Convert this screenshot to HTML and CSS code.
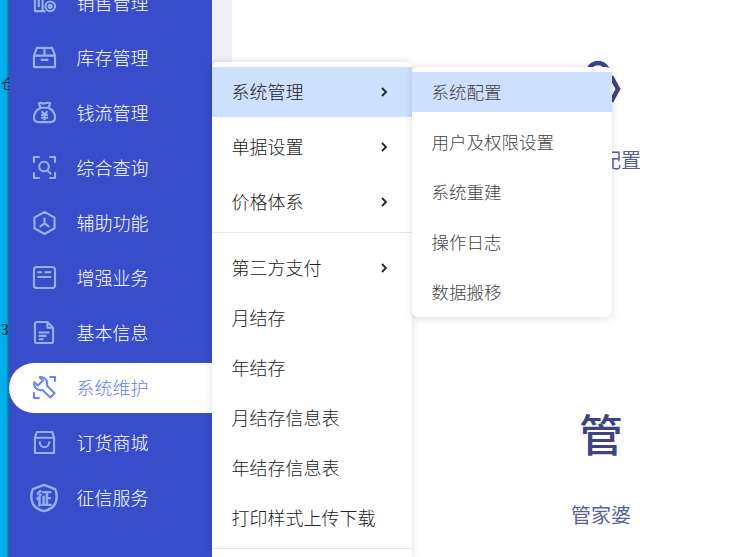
FILE: index.html
```html
<!DOCTYPE html>
<html lang="zh">
<head>
<meta charset="utf-8">
<title>系统维护</title>
<link rel="stylesheet" href="styles.css">
</head>
<body>
<div class="app">
  <div class="strip"><span class="strip-a">仓</span><span class="strip-b">3</span></div>
  <nav class="sidebar">
    <div class="nav-item"><svg class="nav-icon" viewBox="0 0 24 24"><path d="M10 1v20H2V1M10 21h3M6 8v9"/><circle cx="18" cy="16" r="5"/><circle cx="18" cy="16" r="1.6"/></svg><span>销售管理</span></div>
    <div class="nav-item"><svg class="nav-icon" viewBox="0 0 24 24"><path d="M1 10l3-8h16l3 8v12H1zM1 10h22M12 2v8M8 14.500h8"/></svg><span>库存管理</span></div>
    <div class="nav-item"><svg class="nav-icon" viewBox="0 0 24 24"><path d="M8 7L6 2.500c2-1.500 3.500.5 6 0s4-1.500 6 0L16 7M8 7h8M8 7c-4 2-7 6-7 10 0 3 2 5 5 5h12c3 0 5-2 5-5 0-4-3-8-7-10M9 10.500l3 3.500 3-3.500M8.500 14.500h7M8.500 17.500h7M12 14v6"/></svg><span>钱流管理</span></div>
    <div class="nav-item"><svg class="nav-icon" viewBox="0 0 24 24"><path d="M1 7V1h6M17 1h6v6M23 17v6h-6M7 23H1v-6"/><circle cx="11.500" cy="11" r="5"/><path d="M15 15l4 4"/></svg><span>综合查询</span></div>
    <div class="nav-item"><svg class="nav-icon" viewBox="0 0 24 24"><path d="M12 1l10.500 6v11L12 24 1.500 18V7zM12 7v6M12 13l-5 3.500M12 13l5 3.500"/></svg><span>辅助功能</span></div>
    <div class="nav-item"><svg class="nav-icon" viewBox="0 0 24 24"><rect x="1" y="1" width="22" height="22" rx="3"/><path d="M4.500 6.500h5M12 6.500h7M4.500 11.500h14.500"/></svg><span>增强业务</span></div>
    <div class="nav-item"><svg class="nav-icon" viewBox="0 0 24 24"><path d="M4 1h11l6 6v14a2 2 0 0 1-2 2H4a2 2 0 0 1-2-2V3a2 2 0 0 1 2-2zM15 1v6h6M6 12h11M6 15.500h8M6 19h5"/></svg><span>基本信息</span></div>
    <div class="nav-item active"><svg class="nav-icon" viewBox="0 0 24 24"><path d="M7 1.200L10.500 4.700 5 10 1.500 6.500C0 12 5 16 10 14.500l8 8 4.500-4.500-8-8C16 5 12 0 7 1.200zM17 1h6v5M1 17v6h6"/></svg><span>系统维护</span></div>
    <div class="nav-item"><svg class="nav-icon" viewBox="0 0 24 24"><path d="M4 1h16l2 6v16H2V7zM2 7h20M7 11c0 8 10 8 10 0"/></svg><span>订货商城</span></div>
    <div class="nav-item"><svg class="nav-icon nav-icon-big" viewBox="0 0 30 30"><path d="M15 1l12 4.500c2 5 2 11 0 15.500-2 4-7 7-12 8-5-1-10-4-12-8-2-4.500-2-10.500 0-15.500z"/><text class="shield-text" x="15" y="21" text-anchor="middle">征</text></svg><span>征信服务</span></div>
  </nav>
  <div class="gutter"></div>
  <main class="content">
    <section class="tile tile-top">
      <svg class="tile-icon" viewBox="0 0 44 44"><circle cx="18" cy="16" r="10"/><path class="nut" d="M18 21h14l6 11-6 11H18l-6-11z"/></svg>
      <div class="tile-label">系统配置</div>
    </section>
    <section class="tile tile-bottom">
      <div class="tile-glyph">管</div>
      <div class="tile-label">管家婆</div>
    </section>
  </main>
  <div class="menu">
    <div class="menu-group group-one">
      <div class="menu-item selected"><span>系统管理</span><svg class="chev" viewBox="0 0 8 10"><path d="M2 1l4 4-4 4"/></svg></div>
      <div class="menu-item"><span>单据设置</span><svg class="chev" viewBox="0 0 8 10"><path d="M2 1l4 4-4 4"/></svg></div>
      <div class="menu-item"><span>价格体系</span><svg class="chev" viewBox="0 0 8 10"><path d="M2 1l4 4-4 4"/></svg></div>
    </div>
    <div class="menu-group group-two">
      <div class="menu-item"><span>第三方支付</span><svg class="chev" viewBox="0 0 8 10"><path d="M2 1l4 4-4 4"/></svg></div>
      <div class="menu-item"><span>月结存</span></div>
      <div class="menu-item"><span>年结存</span></div>
      <div class="menu-item"><span>月结存信息表</span></div>
      <div class="menu-item"><span>年结存信息表</span></div>
      <div class="menu-item"><span>打印样式上传下载</span></div>
    </div>
  </div>
  <div class="submenu">
    <div class="sub-item selected"><span>系统配置</span></div>
    <div class="sub-item"><span>用户及权限设置</span></div>
    <div class="sub-item"><span>系统重建</span></div>
    <div class="sub-item"><span>操作日志</span></div>
    <div class="sub-item"><span>数据搬移</span></div>
  </div>
</div>
</body>
</html>
```
FILE: styles.css
```css
* { box-sizing: border-box; }
html, body { margin: 0; padding: 0; height: 100%; overflow: hidden; background: #fff; }
body { font-family: "Noto Sans CJK SC", "Liberation Sans", sans-serif; font-weight: 300; }
.app { position: relative; display: flex; width: 742px; height: 557px; overflow: hidden; }
.strip { position: relative; width: 9px; flex: none; background: linear-gradient(90deg, #00b4ec 0, #00aae6 7px, #0a7c96 8px); }
.strip-a, .strip-b { position: absolute; left: 1px; font-size: 14px; line-height: 16px; color: #123; font-weight: 400; overflow: hidden; width: 8px; }
.strip-a { top: 75px; }
.strip-b { top: 321px; }
.sidebar { width: 203px; flex: none; background: #384dc9; display: flex; flex-direction: column; }
.nav-item { display: flex; align-items: center; height: 55px; flex: none; color: #fff; font-size: 18px; padding-left: 24px; }
.nav-item:first-child { margin-top: -25px; }
.nav-item span { margin-left: 20.500px; line-height: 24px; padding-bottom: 2px; }
.nav-icon { width: 23px; height: 23px; flex: none; fill: none; stroke: #93b3ee; stroke-width: 2.200; stroke-linejoin: round; overflow: visible; }
.nav-icon-big { width: 28px; height: 30px; margin-left: -3px; margin-right: -2px; stroke-width: 2.600; }
.shield-text { font-size: 17px; font-weight: 700; fill: #93b3ee; stroke: #93b3ee; stroke-width: .4; }
.nav-item.active { height: 50px; margin: 2.500px 0; background: #fff; color: #6680f5; border-radius: 25px 0 0 25px; }
.nav-item.active .nav-icon { stroke: #6a85fb; }
.gutter { width: 20px; flex: none; background: #eef0f5; }
.content { flex: 1; position: relative; background: #fff; }
.tile { position: absolute; left: 299px; width: 140px; text-align: center; color: #5a5f98; font-weight: 400; }
.tile-top { top: 57px; }
.tile-bottom { top: 403px; }
.tile-icon { display: block; width: 44px; height: 44px; margin: 0 0 44px 49px; fill: none; stroke: #3d4486; stroke-width: 4.500; overflow: visible; }
.nut { fill: #fff; }
.tile-label { font-size: 20px; line-height: 30px; }
.tile-glyph { font-size: 44px; line-height: 60px; font-weight: 500; color: #3d4486; margin-bottom: 37px; }
.menu { position: absolute; left: 212px; top: 62px; width: 200px; background: #fff; border-radius: 6px 6px 0 0; box-shadow: 0 0 8px rgba(0,0,0,.14); padding-top: 5px; height: 495px; }
.menu-group { display: flex; flex-direction: column; border-bottom: 1px solid #e6e7ea; }
.group-one { gap: 5px; padding-bottom: 5px; }
.group-two { padding-top: 10px; padding-bottom: 5px; }
.menu-item { height: 50px; flex: none; display: flex; align-items: center; justify-content: space-between; padding: 0 24px 0 19.500px; font-size: 18px; color: #222; }
.menu-item span, .sub-item span { padding-bottom: 2px; }
.menu-item.selected { background: #cde0fd; }
.chev { width: 8px; height: 10px; fill: none; stroke: #222; stroke-width: 1.800; }
.submenu { position: absolute; left: 412px; top: 67px; width: 200px; background: #fff; border-radius: 6px; box-shadow: 0 1px 8px rgba(0,0,0,.14); padding: 5px 0; display: flex; flex-direction: column; gap: 10px; }
.sub-item { height: 40px; flex: none; display: flex; align-items: center; padding-left: 19.500px; font-size: 17.500px; color: #444; }
.sub-item.selected { background: #cde0fd; }
```
